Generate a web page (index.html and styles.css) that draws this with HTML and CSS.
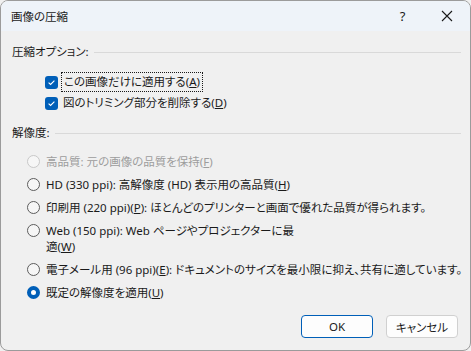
FILE: index.html
```html
<!DOCTYPE html>
<html lang="ja">
<head>
    <meta charset="UTF-8">
    <title>画像の圧縮</title>
    <link rel="stylesheet" href="styles.css">
</head>
<body>
    <div class="window">
        <div class="titlebar">
            <div class="title">画像の圧縮</div>
            <div class="title-btn help">?</div>
            <div class="title-btn close">
                <svg width="12" height="12" viewBox="0 0 12 12"><path d="M1 1 L11 11 M11 1 L1 11" stroke="#1a1a1a" stroke-width="1.1" fill="none"/></svg>
            </div>
        </div>

        <div class="content">
            <div class="group-head first"><span>圧縮オプション:</span><div class="rule"></div></div>

            <div class="check-list">
                <div class="check-row">
                    <span class="checkbox"><svg width="13" height="13" viewBox="0 0 13 13"><path d="M3.6 6.6 L5.6 8.5 L9.4 4.6" stroke="#fff" stroke-width="1.1" fill="none"/></svg></span>
                    <span class="label focused">この画像だけに適用する(<u>A</u>)</span>
                </div>
                <div class="check-row">
                    <span class="checkbox"><svg width="13" height="13" viewBox="0 0 13 13"><path d="M3.6 6.6 L5.6 8.5 L9.4 4.6" stroke="#fff" stroke-width="1.1" fill="none"/></svg></span>
                    <span class="label">図のトリミング部分を削除する(<u>D</u>)</span>
                </div>
            </div>

            <div class="group-head"><span>解像度:</span><div class="rule"></div></div>

            <div class="radio-list">
                <div class="radio-row disabled">
                    <span class="radio"></span>
                    <span class="label">高品質: 元の画像の品質を保持(<u>F</u>)</span>
                </div>
                <div class="radio-row">
                    <span class="radio"></span>
                    <span class="label">HD (330 ppi): 高解像度 (HD) 表示用の高品質(<u>H</u>)</span>
                </div>
                <div class="radio-row">
                    <span class="radio"></span>
                    <span class="label">印刷用 (220 ppi)(<u>P</u>): ほとんどのプリンターと画面で優れた品質が得られます。</span>
                </div>
                <div class="radio-row">
                    <span class="radio"></span>
                    <span class="label">Web (150 ppi): Web ページやプロジェクターに最<br>適(<u>W</u>)</span>
                </div>
                <div class="radio-row">
                    <span class="radio"></span>
                    <span class="label">電子メール用 (96 ppi)(<u>E</u>): ドキュメントのサイズを最小限に抑え、共有に適しています。</span>
                </div>
                <div class="radio-row">
                    <span class="radio checked"></span>
                    <span class="label">既定の解像度を適用(<u>U</u>)</span>
                </div>
            </div>

            <div class="buttons">
                <button class="btn default">OK</button>
                <button class="btn">キャンセル</button>
            </div>
        </div>
    </div>
</body>
</html>
```

FILE: styles.css
```css
* {
    margin: 0;
    padding: 0;
    box-sizing: border-box;
}

body {
    font-family: "Noto Sans", "Noto Sans CJK JP", sans-serif;
    font-size: 11.5px;
    font-feature-settings: "palt";
    color: #1a1a1a;
    background: #f0f0f0;
}

.window {
    width: 471px;
    height: 351px;
    border: 1px solid #9b9b9b;
    border-radius: 8px;
    overflow: hidden;
    background: #f0f0f0;
    display: flex;
    flex-direction: column;
}

.titlebar {
    height: 30px;
    background: #eef3f9;
    display: flex;
    align-items: center;
    padding-left: 10px;
}

.title {
    flex: 1;
}

.title-btn {
    width: 46px;
    height: 30px;
    display: flex;
    align-items: center;
    justify-content: center;
}

.help {
    font-size: 13px;
    padding-left: 3px;
}

.close svg {
    display: block;
}

.content {
    flex: 1;
    padding: 0 9px 0 11px;
    display: flex;
    flex-direction: column;
}

.group-head {
    display: flex;
    align-items: center;
    height: 16px;
    line-height: 16px;
    margin-top: 12px;
}

.group-head.first {
    margin-top: 13px;
}

.group-head .rule {
    flex: 1;
    height: 1px;
    background: #d9d9d9;
    margin-left: 5px;
}

.check-list {
    margin-top: 12px;
    padding-left: 33px;
    display: flex;
    flex-direction: column;
    gap: 1px;
}

.check-row {
    display: flex;
    align-items: center;
    height: 20px;
}

.checkbox {
    width: 13px;
    height: 13px;
    border-radius: 3px;
    background: #005fb8;
    margin-right: 5px;
}

.checkbox svg {
    display: block;
}

.label {
    line-height: 16px;
    white-space: nowrap;
}

.focused {
    outline: 1px dotted #1a1a1a;
    outline-offset: 1px;
    padding: 0 1px;
}

.radio-list {
    margin-top: 13px;
    padding-left: 15px;
    display: flex;
    flex-direction: column;
    gap: 7px;
}

.radio-row {
    display: flex;
    align-items: flex-start;
}

.radio {
    flex: none;
    width: 13px;
    height: 13px;
    margin-top: 1px;
    margin-right: 6px;
    border-radius: 50%;
    border: 1px solid #5c5c5c;
    background: #f6f6f6;
}

.radio.checked {
    border: 4px solid #005fb8;
    background: #fff;
}

.disabled .radio {
    border-color: #c8c8c8;
}

.disabled .label {
    color: #9d9d9d;
}

.buttons {
    margin-top: auto;
    margin-bottom: 12px;
    display: flex;
    justify-content: flex-end;
    gap: 13px;
    padding-right: 3px;
}

.btn {
    width: 72px;
    height: 23px;
    font-family: inherit;
    font-size: 11.5px;
    font-feature-settings: "palt";
    color: #1a1a1a;
    background: #fdfdfd;
    border: 1px solid #d0d0d0;
    border-radius: 4px;
}

.btn.default {
    border-color: #005fb8;
}
```
